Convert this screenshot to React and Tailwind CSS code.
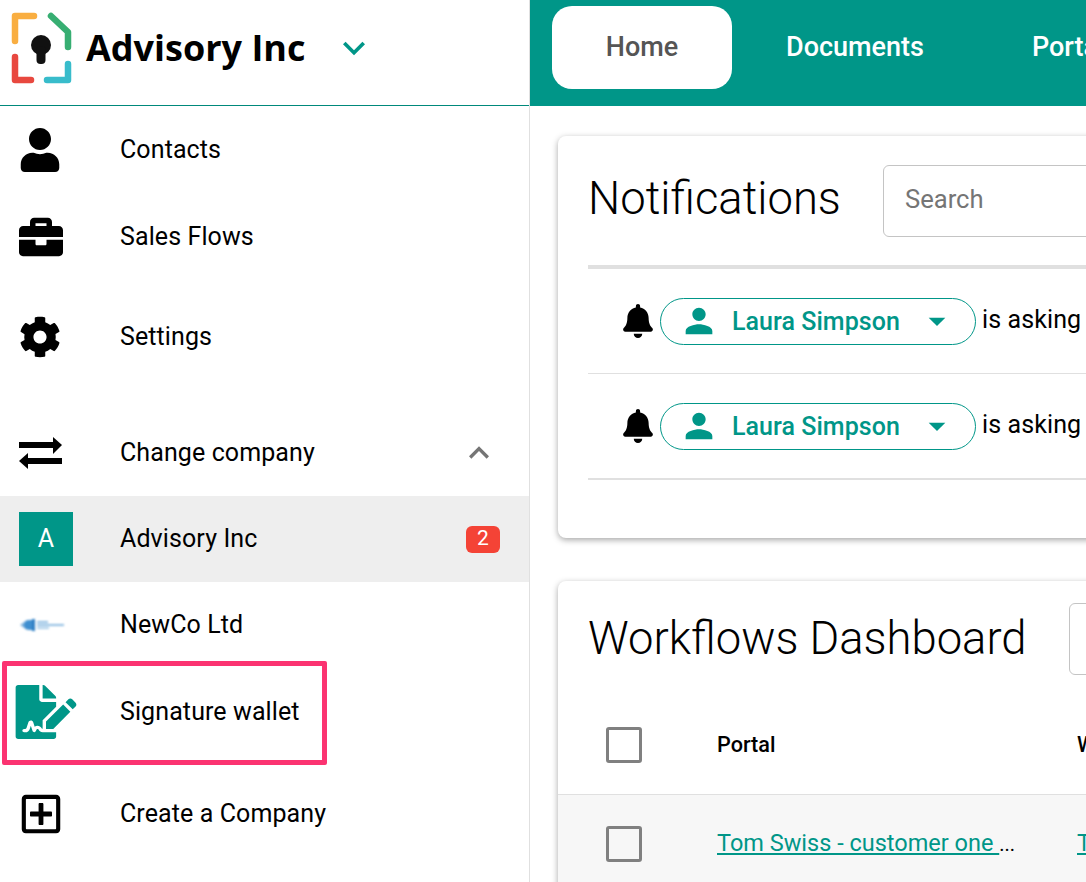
import React from "react";
import { FaUser, FaBriefcase, FaCog, FaFileSignature, FaRegPlusSquare, FaBell } from "react-icons/fa";
import { MdKeyboardArrowDown, MdKeyboardArrowUp, MdPerson, MdArrowDropDown } from "react-icons/md";

const Logo = () => (
  <svg width="72" height="84" viewBox="0 0 72 84" className="shrink-0" fill="none" strokeWidth="6.5" strokeLinecap="round" strokeLinejoin="round">
    <path d="M15 41V16H34" stroke="#f9ae41" />
    <path d="M51 16L68 32V47" stroke="#37ae72" />
    <path d="M15 57V80H31" stroke="#e8483f" />
    <path d="M47 80H68V64" stroke="#38bccb" />
    <circle cx="41" cy="45" r="10" fill="#111" stroke="none" />
    <rect x="36.500" y="46" width="9" height="18" rx="4" fill="#111" stroke="none" />
  </svg>
);

const SwapIcon = () => (
  <svg width="44" height="34" viewBox="0 0 44 34" className="text-black" fill="currentColor">
    <rect x="0" y="6" width="36" height="6" />
    <path d="M34 1L43 9L34 18Z" />
    <rect x="8" y="22" width="35" height="6" />
    <path d="M9 17L0 25L9 33Z" />
  </svg>
);

const NewcoLogo = () => (
  <svg width="46" height="16" viewBox="0 0 46 16" className="blur-[1px]">
    <path d="M1 8L8 3V13Z" fill="#7fb2dc" />
    <path d="M5 8a5 5 0 0 1 5-5h3v10h-3a5 5 0 0 1-5-5Z" fill="#3f8fd0" />
    <rect x="13" y="2" width="3" height="12" fill="#2f7fc4" />
    <rect x="18" y="4" width="11" height="2" fill="#8fbde2" />
    <rect x="18" y="7" width="27" height="2" fill="#8fbde2" />
    <rect x="18" y="10" width="12" height="2" fill="#a9cdea" />
  </svg>
);

const SideRow = ({ icon, label, className = "", children }) => (
  <div className={`flex h-[86px] items-center shrink-0 ${className}`}>
    <div className="w-[101px] h-full flex items-center shrink-0">{icon}</div>
    <span className="text-[25px] tracking-[0.1px] text-black">{label}</span>
    {children}
  </div>
);

const Notification = () => (
  <div className="h-[105px] flex items-center pl-[35px] border-b border-[#e0e0e0] whitespace-nowrap">
    <FaBell className="w-[30px] h-[34px] text-black shrink-0" />
    <div className="ml-[7px] w-[316px] h-[47px] border border-[#009688] rounded-full flex items-center pl-[18px] text-[#009688] shrink-0">
      <MdPerson className="w-[40px] h-[40px] shrink-0" />
      <span className="ml-[13px] mt-[2px] text-[25px] font-medium tracking-[0.05px]">Laura Simpson</span>
      <MdArrowDropDown className="ml-[17px] w-[40px] h-[40px]" />
    </div>
    <span className="ml-[6px] text-[25px] tracking-[0.1px] text-black -mt-[2px]">is asking</span>
  </div>
);

const Checkbox = () => <div className="w-[36px] h-[36px] border-[3px] border-[#808080] rounded-[3px] shrink-0" />;

export default function App() {
  return (
    <div className="relative flex h-[882px] w-[1086px] overflow-hidden bg-white font-['Roboto',sans-serif]">
      <aside className="w-[530px] shrink-0 border-r border-[#e0e0e0] flex flex-col">
        <div className="h-[106px] shrink-0 border-b border-[#00897b] flex items-center pb-[21px]">
          <Logo />
          <span className="ml-[14px] mt-[12px] text-[36px] font-bold font-['Open_Sans',sans-serif] text-black">Advisory Inc</span>
          <MdKeyboardArrowDown className="ml-[26px] mt-[12px] w-[44px] h-[44px] text-[#009688]" />
        </div>

        <div className="pl-[19px] mt-[1px]">
          <SideRow label="Contacts" icon={<FaUser className="w-[40px] h-[44px] text-black ml-[1px]" />} />
          <SideRow label="Sales Flows" className="mt-[1px]" icon={<FaBriefcase className="w-[44px] h-[44px] text-black" />} />
          <SideRow label="Settings" className="mt-[14px]" icon={<FaCog className="w-[42px] h-[42px] text-black" />} />
          <SideRow label="Change company" className="mt-[30px]" icon={<SwapIcon />}>
            <MdKeyboardArrowUp className="ml-auto mr-[30px] w-[40px] h-[40px] text-[#757575]" />
          </SideRow>
        </div>

        <div className="flex h-[86px] items-center bg-[#eeeeee] pl-[19px] shrink-0">
          <div className="w-[101px] shrink-0">
            <div className="w-[54px] h-[54px] bg-[#009688] text-white text-[25px] flex items-center justify-center">A</div>
          </div>
          <span className="text-[25px] tracking-[0.1px] text-black">Advisory Inc</span>
          <span className="ml-auto mr-[29px] w-[34px] h-[27px] rounded-[6px] bg-[#f44336] text-white text-[21px] flex items-center justify-center">2</span>
        </div>

        <div className="pl-[19px]">
          <SideRow label="NewCo Ltd" icon={<NewcoLogo />} />
          <SideRow label="Signature wallet" className="mt-[1px]" icon={<FaFileSignature className="w-[62px] h-[54px] -ml-[4px] text-[#009688]" />} />
          <SideRow label="Create a Company" className="mt-[16px]" icon={<FaRegPlusSquare className="w-[44px] h-[44px] text-black" />} />
        </div>
      </aside>

      {/* highlight drawn on top of the screenshot */}
      <div className="absolute left-[2px] top-[661px] w-[325px] h-[104px] border-[5px] border-[#fb3371] rounded-[2px] pointer-events-none" />

      <main className="flex-1 min-w-0 overflow-hidden">
        <nav className="h-[106px] bg-[#009688] flex items-center pl-[22px] pb-[11px] whitespace-nowrap text-[27px] font-medium text-white">
          <div className="w-[180px] h-[83px] shrink-0 bg-white rounded-[20px] text-[#555555] flex items-center justify-center">Home</div>
          <span className="ml-[54px]">Documents</span>
          <span className="ml-[108px]">Portal</span>
        </nav>

        <div className="pl-[28px] pt-[30px] w-[800px]">
          <section className="h-[402px] bg-white rounded-[8px] shadow-[0_2px_6px_rgba(0,0,0,0.35)] pl-[30px]">
            <div className="flex items-center h-[129px] whitespace-nowrap">
              <h2 className="text-[45.4px] font-light text-black w-[295px] shrink-0 -mt-[2px]">Notifications</h2>
              <div className="flex-1 h-[72px] border border-[#c4c4c4] rounded-[6px] flex items-center pl-[21px] pb-[2px] text-[25.6px] text-[#757575]">Search</div>
            </div>
            <div className="h-[4px] bg-[#e0e0e0]" />
            <Notification />
            <Notification />
            <div className="h-px bg-[#e0e0e0]" />
          </section>

          <section className="mt-[43px] bg-white rounded-t-[8px] shadow-[0_2px_6px_rgba(0,0,0,0.35)] h-[320px]">
            <div className="flex items-center pl-[30px] h-[116px] whitespace-nowrap">
              <h2 className="text-[45.4px] font-light text-black w-[481px] shrink-0">Workflows Dashboard</h2>
              <div className="flex-1 h-[72px] border border-[#c4c4c4] rounded-[6px]" />
            </div>
            <div className="flex items-center h-[98px] pb-[2px] border-b border-[#e0e0e0] pl-[48px] text-[21.6px] font-medium text-black whitespace-nowrap">
              <Checkbox />
              <span className="ml-[75px] mt-[2px] w-[360px] shrink-0">Portal</span>
              <span className="mt-[2px]">Workflow</span>
            </div>
            <div className="flex items-center h-[98px] bg-[#f7f7f7] pl-[48px] text-[23.5px] whitespace-nowrap">
              <Checkbox />
              <span className="ml-[75px] w-[360px] shrink-0">
                <span className="text-[#009688] underline whitespace-pre">Tom Swiss - customer one </span>
                <span className="text-[20px] text-black">...</span>
              </span>
              <span className="text-[#009688] underline">Tom</span>
            </div>
          </section>
        </div>
      </main>
    </div>
  );
}
